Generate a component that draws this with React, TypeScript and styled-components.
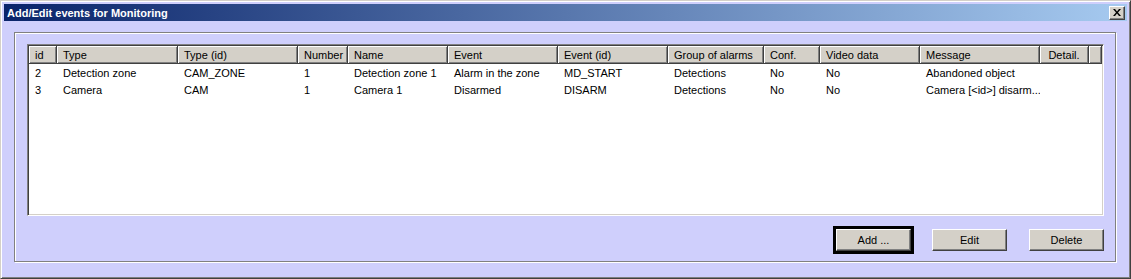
import React from 'react';
import styled, { createGlobalStyle } from 'styled-components';

const GlobalStyle = createGlobalStyle`
  html, body {
    margin: 0;
    padding: 0;
    background: #cfcffc;
  }
  body {
    font-family: "Liberation Sans", Arial, sans-serif;
    font-size: 11px;
    color: #000;
  }
`;

const WindowStyled = styled.div`
  box-sizing: border-box;
  width: 1131px;
  height: 279px;
  background: #cfcffc;
  border: 1px solid;
  border-color: #d4d0c8 #404040 #404040 #d4d0c8;
  box-shadow: inset 1px 1px 0 #fff, inset -1px -1px 0 #808080;
  padding: 3px;
  display: flex;
  flex-direction: column;
`;

const TitleBar = styled.div`
  height: 18px;
  display: flex;
  align-items: center;
  justify-content: space-between;
  padding: 0 2px 0 3px;
  background: linear-gradient(to right, #0a246a, #a6caf0);
  color: #fff;
  font-weight: 700;
  font-size: 11px;
`;

const CloseButton = styled.div`
  box-sizing: border-box;
  width: 16px;
  height: 14px;
  background: #d4d0c8;
  border: 1px solid;
  border-color: #fff #404040 #404040 #fff;
  box-shadow: inset -1px -1px 0 #808080;
  display: flex;
  align-items: center;
  justify-content: center;
`;

const Body = styled.div`
  flex: 1;
  padding: 11px 12px 13px 10px;
  display: flex;
`;

const Frame = styled.div`
  flex: 1;
  border: 1px solid #808080;
  box-shadow: 1px 1px 0 #fff, inset 1px 1px 0 #fff;
  padding: 11px 11px 7px 12px;
  display: flex;
  flex-direction: column;
`;

const ListView = styled.div`
  box-sizing: border-box;
  height: 172px;
  background: #fff;
  border: 1px solid;
  border-color: #808080 #fff #fff #808080;
  box-shadow: inset 1px 1px 0 #404040, inset -1px -1px 0 #d4d0c8;
  padding: 1px;
  overflow: hidden;
`;

const Row = styled.div<{ $header?: boolean }>`
  display: flex;
  height: ${p => (p.$header ? 18 : 17)}px;
  align-items: stretch;
`;

const HeaderCell = styled.div<{ $w: number; $center?: boolean }>`
  box-sizing: border-box;
  width: ${p => p.$w}px;
  flex: ${p => (p.$w ? 'none' : '1')};
  background: #d4d0c8;
  box-shadow: inset 1px 1px 0 #fff, inset -1px -1px 0 #808080;
  border-right: 1px solid #404040;
  border-bottom: 1px solid #404040;
  padding: 0 6px;
  display: flex;
  align-items: center;
  justify-content: ${p => (p.$center ? 'center' : 'flex-start')};
  white-space: nowrap;
  overflow: hidden;
`;

const Cell = styled.div<{ $w: number }>`
  box-sizing: border-box;
  width: ${p => p.$w}px;
  flex: none;
  padding: 0 7px 0 6px;
  display: flex;
  align-items: center;
  white-space: nowrap;
  overflow: hidden;
`;

const ButtonRow = styled.div`
  margin-top: 10px;
  display: flex;
  justify-content: flex-end;
  align-items: center;
  height: 28px;
`;

const DefaultFrame = styled.div`
  border: 3px solid #000;
  display: flex;
`;

const Button = styled.button<{ $ml?: number }>`
  box-sizing: border-box;
  width: 75px;
  height: 22px;
  margin: 0 0 0 ${p => p.$ml ?? 0}px;
  padding: 0;
  background: #d4d0c8;
  border: 1px solid;
  border-color: #fff #404040 #404040 #fff;
  box-shadow: inset -1px -1px 0 #808080;
  font-family: "Liberation Sans", Arial, sans-serif;
  font-size: 11px;
  color: #000;
`;

const columns = [
  { title: 'id', w: 28 },
  { title: 'Type', w: 121 },
  { title: 'Type (id)', w: 120 },
  { title: 'Number', w: 50 },
  { title: 'Name', w: 100 },
  { title: 'Event', w: 110 },
  { title: 'Event (id)', w: 110 },
  { title: 'Group of alarms', w: 96 },
  { title: 'Conf.', w: 56 },
  { title: 'Video data', w: 100 },
  { title: 'Message', w: 120 },
  { title: 'Detail.', w: 49, center: true },
];

const rows = [
  ['2', 'Detection zone', 'CAM_ZONE', '1', 'Detection zone 1', 'Alarm in the zone', 'MD_START', 'Detections', 'No', 'No', 'Abandoned object', ''],
  ['3', 'Camera', 'CAM', '1', 'Camera 1', 'Disarmed', 'DISARM', 'Detections', 'No', 'No', 'Camera [<id>] disarm...', ''],
];

const CloseIcon = () => (
  <svg width="8" height="7" viewBox="0 0 8 7">
    <path d="M0 0h2l2 2.5L6 0h2L5 3.5 8 7H6L4 4.5 2 7H0l3-3.5z" fill="#000" />
  </svg>
);

const App = () => {
  return <>
    <GlobalStyle />
    <WindowStyled>
      <TitleBar>
        <span>Add/Edit events for Monitoring</span>
        <CloseButton><CloseIcon /></CloseButton>
      </TitleBar>
      <Body>
        <Frame>
          <ListView>
            <Row $header>
              {columns.map((c, i) => (
                <HeaderCell key={i} $w={c.w} $center={c.center}>{c.title}</HeaderCell>
              ))}
              <HeaderCell $w={0} />
            </Row>
            {rows.map((r, i) => (
              <Row key={i}>
                {r.map((v, j) => <Cell key={j} $w={columns[j].w}>{v}</Cell>)}
              </Row>
            ))}
          </ListView>
          <ButtonRow>
            <DefaultFrame><Button>Add ...</Button></DefaultFrame>
            <Button $ml={18}>Edit</Button>
            <Button $ml={22}>Delete</Button>
          </ButtonRow>
        </Frame>
      </Body>
    </WindowStyled>
  </>;
};

export default App;
